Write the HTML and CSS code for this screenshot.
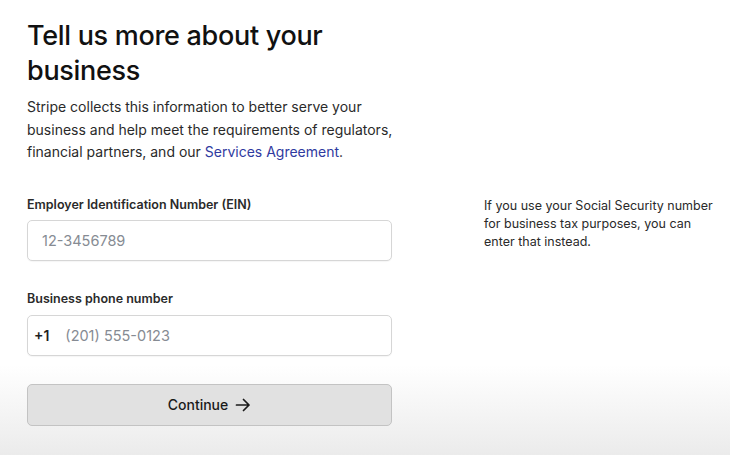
FILE: index.html
```html
<!DOCTYPE html>
<html>
<head>
<meta charset="utf-8">
<link rel="stylesheet" href="styles.css">
</head>
<body>
<div class="page">
  <h1 class="title">Tell us more about your business</h1>
  <p class="intro">Stripe collects this information to better serve your business and help meet the requirements of regulators, financial partners, and our <a class="link" href="#">Services Agreement</a>.</p>
  <div class="form-grid">
    <div class="fields">
      <div class="field">
        <label class="label">Employer Identification Number (EIN)</label>
        <div class="input"><span class="placeholder">12-3456789</span></div>
      </div>
      <div class="field">
        <label class="label">Business phone number</label>
        <div class="input"><span class="prefix">+1</span><span class="placeholder">(201) 555-0123</span></div>
      </div>
      <button class="continue">Continue
        <svg class="arrow" width="16" height="14" viewBox="0 0 16 14"><path d="M1.5 7h12.5M8.5 1.5L14 7l-5.5 5.5" fill="none" stroke="#1a1a1a" stroke-width="1.7" stroke-linecap="round" stroke-linejoin="round"/></svg>
      </button>
    </div>
    <p class="hint">If you use your Social Security number for business tax purposes, you can enter that instead.</p>
  </div>
</div>
</body>
</html>
```

FILE: styles.css
```css
html, body {
  margin: 0;
  height: 100%;
}
body {
  font-family: Inter, "Liberation Sans", sans-serif;
  color: #1a1a1a;
  background: linear-gradient(to bottom, #ffffff 0px, #ffffff 365px, #ebebeb 455px);
  overflow: hidden;
}
.page {
  padding: 18px 0 0 27px;
}
.title {
  margin: 0;
  width: 320px;
  font-size: 27px;
  line-height: 35px;
  font-weight: 500;
  letter-spacing: -0.3px;
  color: #111;
}
.intro {
  margin: 8px 0 0;
  width: 372px;
  font-size: 14px;
  line-height: 22.5px;
  color: #2a2a2a;
}
.link {
  color: #2f3aa0;
  text-decoration: none;
}
.form-grid {
  margin-top: 32px;
  display: grid;
  grid-template-columns: 365px 240px;
  column-gap: 92px;
  align-items: start;
}
.fields {
  display: flex;
  flex-direction: column;
}
.field {
  display: flex;
  flex-direction: column;
  margin-bottom: 29px;
}
.field + .field {
  margin-bottom: 28px;
}
.label {
  font-size: 12.5px;
  line-height: 17px;
  font-weight: 600;
  color: #2a2a2a;
  margin-bottom: 8px;
}
.field:first-child .label {
  margin-bottom: 7px;
}
.input {
  height: 39px;
  border: 1px solid #d6d6d6;
  border-radius: 5px;
  background: #fff;
  box-shadow: 0 1px 1px rgba(0,0,0,0.04);
  display: flex;
  align-items: center;
  padding: 0 14px;
  font-size: 14px;
}
.input .placeholder {
  font-size: 14.5px;
}
.prefix {
  color: #1f1f1f;
  font-weight: 600;
  margin-left: -8px;
  margin-right: 16px;
}
.placeholder {
  color: #868b93;
}
.continue {
  height: 42px;
  border: 1px solid #c3c3c3;
  border-radius: 5px;
  background: #e1e1e1;
  font-family: Inter, "Liberation Sans", sans-serif;
  font-size: 14px;
  font-weight: 500;
  color: #1a1a1a;
  display: flex;
  align-items: center;
  justify-content: center;
  gap: 7px;
  padding: 0;
}
.hint {
  margin: 1px 0 0;
  width: 238px;
  font-size: 12.5px;
  line-height: 18px;
  color: #2a2a2a;
}
```
